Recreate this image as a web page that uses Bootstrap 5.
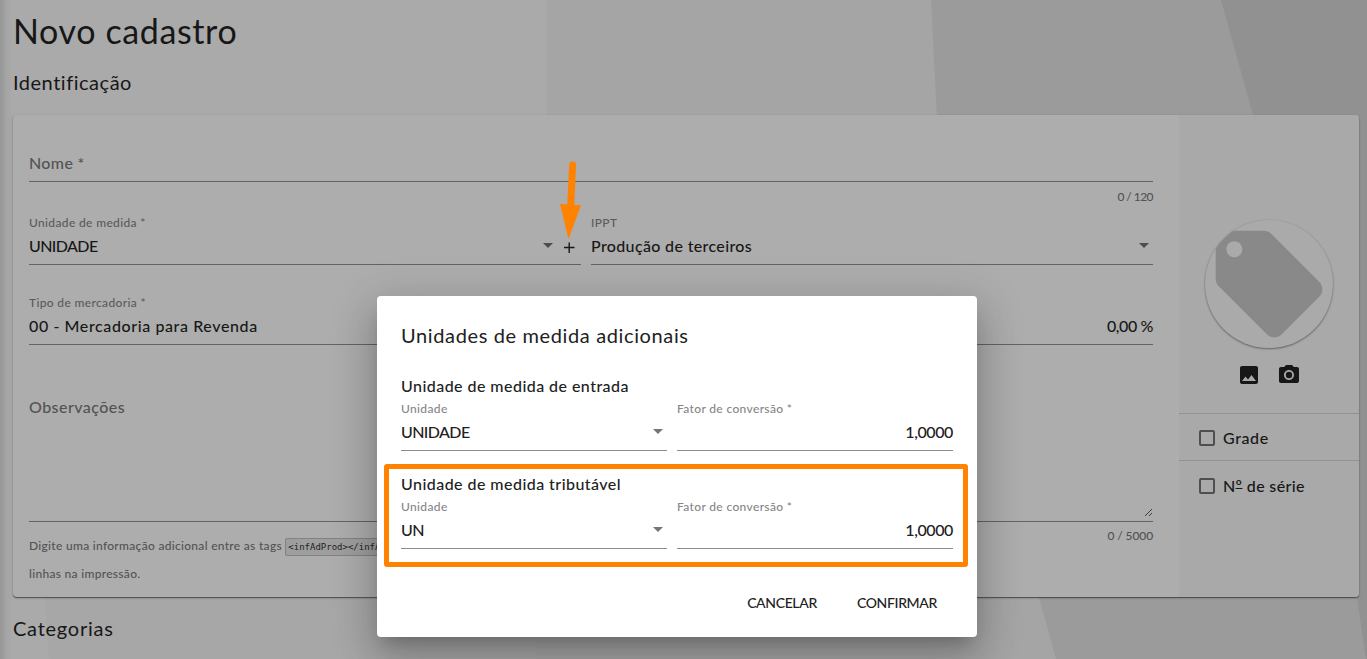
<!DOCTYPE html>
<html lang="pt-BR">
<head>
<meta charset="utf-8">
<meta name="viewport" content="width=device-width, initial-scale=1">
<title>Novo cadastro</title>
<link href="https://cdn.jsdelivr.net/npm/bootstrap@5.3.0/dist/css/bootstrap.min.css" rel="stylesheet">
<style>
  body { font-family: Lato, "Liberation Sans", sans-serif; font-size: 16px; font-weight: 500; line-height: 24px; color: #171717; background: #aaa; height: 659px; letter-spacing: .35px; }
  .backdrop-art { z-index: -1; }
  .edge-shade { width: 13px; background: linear-gradient(90deg, rgba(0,0,0,.12), rgba(0,0,0,.03) 50%, transparent); }
  .page { padding: 7px 8px 0 13px; }
  .page-title { font-size: 34px; line-height: 48px; font-weight: 400; letter-spacing: .62px; margin: 0; }
  .section-title { font-size: 20px; line-height: 28px; font-weight: 400; margin: 0; letter-spacing: .52px; }
  .title-ident { padding-top: 13px; }
  .title-cat { padding-top: 17px; letter-spacing: .75px; }
  .sheet { height: 482px; margin-top: 19px; border-radius: 4px; background: #adadad; box-shadow: 0 1px 1px rgba(0,0,0,.45), 0 1px 3px rgba(0,0,0,.2); overflow: hidden; }
  .sheet-main { padding: 0 26px 0 16px; }
  .sheet-side { width: 180px; background: #a9a9a9; }
  .fld { border-bottom: 1px solid #636363; }
  .fld-half { width: 552px; }
  .fld-cap { font-size: 12px; line-height: 17px; color: #5b5b5b; letter-spacing: .35px; }
  .fld-val { height: 33px; line-height: 24px; padding-top: 3px; }
  .ghost { color: #535353; }
  .h-nome { height: 67px; padding-top: 36px; }
  .h-row { height: 83px; gap: 10px; }
  .h-row3 { height: 80px; }
  .h-obs { height: 177px; padding-top: 50px; letter-spacing: .45px; }
  .note { font-size: 12px; color: #535353; line-height: 28px; letter-spacing: .3px; }
  .note-main { padding-top: 10px; }
  .note-top { line-height: 20px; height: 0; margin: 5px 0 -5px; letter-spacing: -.1px; }
  .note-short { letter-spacing: -.55px; }
  .note-long { margin-top: 4px; }
  .caps { letter-spacing: -.6px; }
  .digits { letter-spacing: -.4px; }
  .long-text { letter-spacing: .6px; }
  .tagcode { font-family: "DejaVu Sans Mono", monospace; font-size: 9px; line-height: 1; letter-spacing: 0; color: #222; background: #9e9e9e; border: 1px solid #828282; border-radius: 2px; padding: 3px 2px; }
  .caret { width: 0; border: 5px solid transparent; border-top-color: #4d4d4d; border-bottom: 0; margin-top: 9px; }
  .avatar-disc { width: 128px; height: 128px; margin-top: 105px; box-shadow: 0 1px 2px rgba(0,0,0,.4), 0 0 2px rgba(0,0,0,.08); background: #aaa; }
  .side-icons { height: 65px; padding-top: 15px; }
  .side-row { border-top: 1px solid #929292; padding-left: 20px; height: 47px; padding-top: 1px; }
  .tick { width: 16px; height: 16px; border: 2px solid #4f4f4f; border-radius: 2px; }
  .ordinal { text-decoration: underline; text-decoration-thickness: 1px; text-underline-offset: -4px; }
  .dialog-box { width: 600px; height: 341px; left: 377px; top: 296px; border-radius: 4px; background: #fff; color: #212121; padding: 23px 24px; box-shadow: 0 11px 15px -7px rgba(0,0,0,.2), 0 24px 38px 3px rgba(0,0,0,.14), 0 9px 46px 8px rgba(0,0,0,.12); }
  .dialog-box .fld { border-color: #8c8c8c; height: 51px; }
  .dialog-box .fld-cap { color: #868686; }
  .dialog-box .caret { border-top-color: #757575; }
  .dialog-title { font-size: 20px; line-height: 32px; font-weight: 400; margin: 0 0 23px; letter-spacing: .63px; }
  .grp { height: 98px; }
  .grp-title { line-height: 24px; font-size: 16px; height: 26px; letter-spacing: .45px; }
  .w-unit { width: 266px; }
  .w-factor { width: 276px; }
  .frame-mark { left: 384px; top: 464px; width: 584px; height: 103px; border: 5px solid #ff8200; border-radius: 3px; }
  .arrow-mark { left: 555px; top: 155px; }
  .actions { padding-top: 21px; }
  .act { font-size: 14px; color: #212121; padding: 0; line-height: 24px; border: 0; letter-spacing: -.35px; font-weight: 500; }
</style>
</head>
<body class="overflow-hidden position-relative">
<svg class="backdrop-art position-absolute top-0 start-0" width="1367" height="659" viewBox="0 0 1367 659" aria-hidden="true">
  <rect width="1367" height="659" fill="#aaa"/>
  <path d="M44 590L49 659H1367V590Z" fill="#a7a7a7"/>
  <path d="M547 0H1367V300H547ZM536 590H1367V659H536Z" fill="#a5a5a5"/>
  <path d="M931 0L937 120H1367V0ZM1037 590L1056 659H1367V590Z" fill="#9b9b9b"/>
  <path d="M1221 0L1253 115L1357 598L1366 659H1367V0Z" fill="#919191"/>
</svg>
<div class="edge-shade position-absolute top-0 start-0 h-100"></div>

<main class="page">
  <h1 class="page-title">Novo cadastro</h1>
  <h2 class="section-title title-ident">Identificação</h2>

  <section class="sheet d-flex">
    <div class="sheet-main flex-grow-1">
      <div class="fld h-nome ghost">Nome *</div>
      <div class="note note-top note-short text-end">0 / 120</div>
      <div class="d-flex h-row">
        <div class="fld fld-half d-flex flex-column justify-content-end">
          <div class="fld-cap">Unidade de medida *</div>
          <div class="fld-val d-flex align-items-start">
            <span class="caps">UNIDADE</span>
            <span class="caret ms-auto me-2"></span>
            <svg class="me-1" width="16" height="24" viewBox="0 0 16 24" stroke="#171717" stroke-width="1.4"><path d="M3 13.500h10.500M8.200 8.500v10.500"/></svg>
          </div>
        </div>
        <div class="fld d-flex flex-column justify-content-end flex-grow-1">
          <div class="fld-cap">IPPT</div>
          <div class="fld-val d-flex"><span>Produção de terceiros</span><span class="caret ms-auto me-1"></span></div>
        </div>
      </div>
      <div class="d-flex h-row3">
        <div class="fld fld-half d-flex flex-column justify-content-end">
          <div class="fld-cap">Tipo de mercadoria *</div>
          <div class="fld-val long-text">00 - Mercadoria para Revenda</div>
        </div>
        <div class="fld d-flex flex-column justify-content-end flex-grow-1">
          <div class="fld-val digits text-end">0,00 %</div>
        </div>
      </div>
      <div class="fld h-obs ghost position-relative">Observações
        <svg class="position-absolute bottom-0 end-0 mb-1" width="9" height="9" viewBox="0 0 9 9" stroke="#3c3c3c" fill="none"><path d="M1 8L8 1M5 8L8 5"/></svg>
      </div>
      <div class="d-flex justify-content-between">
        <div class="note note-main">Digite uma informação adicional entre as tags <span class="tagcode">&lt;infAdProd&gt;&lt;/infAdProd&gt;</span><br>linhas na impressão.</div>
        <div class="note note-top note-long">0 / 5000</div>
      </div>
    </div>
    <aside class="sheet-side flex-shrink-0 d-flex flex-column">
      <div class="avatar-disc rounded-circle overflow-hidden mx-auto flex-shrink-0">
        <svg class="d-block" width="128" height="128" viewBox="0 0 24 24" fill="#898989"><path d="M21.410 11.580l-9-9C12.050 2.220 11.550 2 11 2H4c-1.100 0-2 .9-2 2v7c0 .55.22 1.050.59 1.420l9 9c.36.36.86.58 1.410.58.55 0 1.050-.22 1.410-.59l7-7c.37-.36.59-.86.59-1.410 0-.55-.23-1.060-.59-1.420zM5.500 7C4.670 7 4 6.330 4 5.500S4.670 4 5.500 4 7 4.670 7 5.500 6.330 7 5.500 7z"/></svg>
      </div>
      <div class="side-icons d-flex justify-content-center gap-3">
        <svg width="24" height="24" viewBox="0 0 24 24" fill="#171717"><path d="M21 19V5c0-1.100-.9-2-2-2H5c-1.100 0-2 .9-2 2v14c0 1.100.9 2 2 2h14c1.100 0 2-.9 2-2zM8.500 13.500l2.500 3.010L14.500 12l4.500 6H5l3.500-4.500z"/></svg>
        <svg width="24" height="24" viewBox="0 0 24 24" fill="#171717"><circle cx="12" cy="12" r="3.200"/><path d="M9 2L7.170 4H4c-1.100 0-2 .9-2 2v12c0 1.100.9 2 2 2h16c1.100 0 2-.9 2-2V6c0-1.100-.9-2-2-2h-3.170L15 2H9zm3 15c-2.760 0-5-2.240-5-5s2.240-5 5-5 5 2.240 5 5-2.240 5-5 5z"/></svg>
      </div>
      <div class="side-row long-text d-flex align-items-center gap-2"><span class="tick"></span><span>Grade</span></div>
      <div class="side-row d-flex align-items-center gap-2 pt-1"><span class="tick"></span><span>N<span class="ordinal">º</span> de série</span></div>
    </aside>
  </section>
  <h2 class="section-title title-cat">Categorias</h2>
</main>

<div class="dialog-box position-absolute" role="dialog">
  <h3 class="dialog-title">Unidades de medida adicionais</h3>
  <div class="grp">
    <div class="grp-title">Unidade de medida de entrada</div>
    <div class="d-flex justify-content-between">
      <div class="fld w-unit"><div class="fld-cap">Unidade</div><div class="fld-val d-flex"><span class="caps">UNIDADE</span><span class="caret ms-auto me-1"></span></div></div>
      <div class="fld w-factor"><div class="fld-cap">Fator de conversão *</div><div class="fld-val digits text-end">1,0000</div></div>
    </div>
  </div>
  <div class="grp">
    <div class="grp-title">Unidade de medida tributável</div>
    <div class="d-flex justify-content-between">
      <div class="fld w-unit"><div class="fld-cap">Unidade</div><div class="fld-val d-flex"><span class="caps">UN</span><span class="caret ms-auto me-1"></span></div></div>
      <div class="fld w-factor"><div class="fld-cap">Fator de conversão *</div><div class="fld-val digits text-end">1,0000</div></div>
    </div>
  </div>
  <div class="actions d-flex justify-content-end pe-3">
    <button class="btn act me-4">CANCELAR</button>
    <button class="btn act ms-3">CONFIRMAR</button>
  </div>
</div>

<div class="frame-mark position-absolute"></div>
<svg class="arrow-mark position-absolute" width="32" height="90" viewBox="0 0 32 90"><path d="M17.600 10L15.500 55" stroke="#ff8200" stroke-width="7" stroke-linecap="round"/><path d="M5 49L26 50.200L13.500 84Z" fill="#ff8200"/></svg>
<script src="https://cdn.jsdelivr.net/npm/bootstrap@5.3.0/dist/js/bootstrap.bundle.min.js"></script>
</body>
</html>
